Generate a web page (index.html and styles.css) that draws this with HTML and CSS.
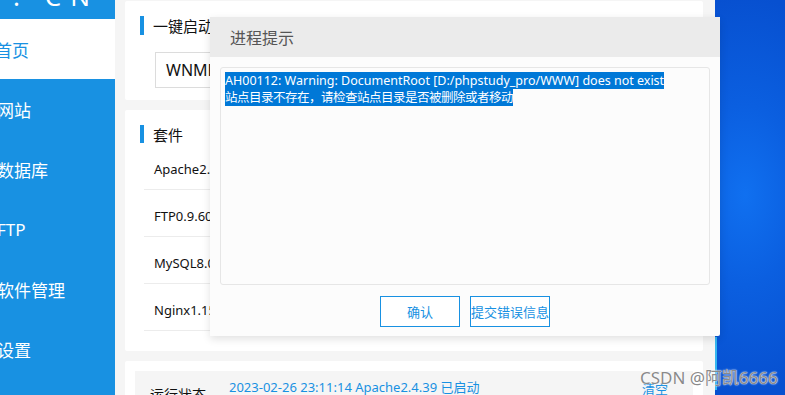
FILE: index.html
```html
<!DOCTYPE html>
<html lang="zh-CN">
<head>
<meta charset="utf-8">
<title>phpstudy</title>
<link rel="stylesheet" href="styles.css">
</head>
<body>
<div class="screen">
  <div class="app">
    <aside class="sidebar">
      <div class="logo"><span class="logo-text">. CN</span></div>
      <nav class="nav">
        <div class="nav-item active">首页</div>
        <div class="nav-item">网站</div>
        <div class="nav-item">数据库</div>
        <div class="nav-item">FTP</div>
        <div class="nav-item">软件管理</div>
        <div class="nav-item">设置</div>
      </nav>
    </aside>
    <main class="main">
      <section class="card card-start">
        <h2 class="card-title">一键启动</h2>
        <div class="select">WNMP</div>
      </section>
      <section class="card card-suite">
        <h2 class="card-title">套件</h2>
        <ul class="suite-list">
          <li class="suite-row">Apache2.4.39</li>
          <li class="suite-row">FTP0.9.60</li>
          <li class="suite-row">MySQL8.0.12</li>
          <li class="suite-row">Nginx1.15.11</li>
        </ul>
      </section>
      <section class="card card-status">
        <div class="status-box">
          <span class="status-label">运行状态</span>
          <span class="status-log">2023-02-26 23:11:14 Apache2.4.39 已启动</span>
          <span class="status-clear">清空</span>
        </div>
      </section>
    </main>
  </div>
  <div class="desktop"><div class="edge-glow"></div></div>

  <div class="dialog">
    <div class="dialog-head">进程提示</div>
    <div class="dialog-body">
      <div class="log-area">
        <span class="sel">AH00112: Warning: DocumentRoot [D:/phpstudy_pro/WWW] does not exist </span><br>
        <span class="sel sel-cn">站点目录不存在，请检查站点目录是否被删除或者移动</span>
      </div>
      <div class="dialog-actions">
        <button class="btn">确认</button>
        <button class="btn">提交错误信息</button>
      </div>
    </div>
  </div>

  <div class="watermark">CSDN @阿凯6666</div>
</div>
</body>
</html>
```

FILE: styles.css
```css
* { box-sizing: border-box; }
html, body { margin: 0; padding: 0; }
body {
  width: 785px;
  height: 395px;
  overflow: hidden;
  font-family: "Noto Sans", "Noto Sans CJK SC", sans-serif;
  background: #f5f5f5;
}
.screen {
  position: relative;
  display: flex;
  width: 785px;
  height: 395px;
  overflow: hidden;
}
.app {
  display: flex;
  width: 715px;
  height: 395px;
  background: #f5f5f5;
  flex: none;
  overflow: hidden;
}

/* sidebar */
.sidebar {
  width: 115px;
  flex: none;
  background: #1891e2;
  display: flex;
  flex-direction: column;
}
.logo {
  height: 19px;
  overflow: hidden;
}
.logo-text {
  display: block;
  margin-top: -17px;
  margin-left: 13px;
  font-family: "Noto Sans", sans-serif;
  font-size: 26px;
  line-height: 26px;
  color: #fff;
  letter-spacing: 9px;
  white-space: nowrap;
}
.nav { display: flex; flex-direction: column; }
.nav-item {
  height: 60px;
  flex: none;
  display: flex;
  align-items: center;
  margin-left: -3px;
  font-size: 17px;
  color: #fff;
}
.nav-item.active {
  background: #fff;
  color: #1891e2;
  margin-left: 0;
  text-indent: -5px;
}

/* main */
.main {
  width: 588px;
  flex: none;
  padding: 1px 0 0 10px;
  display: flex;
  flex-direction: column;
  gap: 10px;
}
.card {
  background: #fff;
  border-radius: 2px;
  width: 578px;
  flex: none;
}
.card-title {
  margin: 0;
  height: 19px;
  display: flex;
  align-items: center;
  font-size: 15px;
  font-weight: normal;
  color: #111;
  border-left: 4px solid #1891e2;
  padding-left: 9px;
}
.card-start {
  height: 99px;
  padding: 15px 0 0 15px;
}
.select {
  margin: 17px 0 0 15px;
  width: 230px;
  height: 36px;
  border: 1px solid #dcdcdc;
  display: flex;
  align-items: center;
  padding-left: 10px;
  font-size: 16px;
  color: #111;
}
.card-suite {
  height: 241px;
  padding: 15px 0 0 15px;
}
.card-suite .card-title { height: 18px; }
.suite-list {
  list-style: none;
  margin: 0;
  padding: 0 0 0 4px;
}
.suite-row {
  height: 47px;
  padding: 19px 0 0 10px;
  line-height: 15px;
  font-size: 13px;
  color: #111;
  border-bottom: 1px solid #ececec;
}
.card-status {
  height: 60px;
  padding: 10px 10px 0 10px;
}
.status-box {
  background: #f5f5f5;
  height: 50px;
  display: flex;
  align-items: flex-start;
  font-size: 13px;
}
.status-label {
  margin: 14px 0 0 15px;
  color: #111;
  font-size: 14px;
  line-height: 19px;
}
.status-log {
  margin: 8px 0 0 23px;
  line-height: 17px;
  color: #1891e2;
}
.status-clear {
  margin: 10px 25px 0 auto;
  line-height: 17px;
  color: #1891e2;
}

/* desktop */
.desktop {
  flex: 1;
  position: relative;
  background: radial-gradient(ellipse 120px 200px at 30px 195px, #1070f0 0%, #0b5fe0 45%, #0750d0 100%);
}
.edge-glow {
  position: absolute;
  left: 0;
  top: 337px;
  width: 2px;
  height: 53px;
  background: #35b6f0;
}

/* dialog */
.dialog {
  position: absolute;
  left: 210px;
  top: 17px;
  width: 510px;
  height: 319px;
  background: #fcfcfc;
  box-shadow: 0 3px 8px rgba(0,0,0,0.12);
  border-radius: 0 2px 2px 0;
}
.dialog-head {
  height: 40px;
  background: #ebebeb;
  padding-left: 20px;
  display: flex;
  align-items: center;
  font-size: 16px;
  color: #555;
}
.dialog-body {
  padding: 10px 10px 0 10px;
}
.log-area {
  height: 218px;
  border: 1px solid #e6e6e6;
  border-radius: 3px;
  background: #fcfcfc;
  padding: 4px 0 0 4px;
  font-size: 12.5px;
  line-height: 17px;
  color: #fff;
}
.sel {
  background: #0078d7;
  color: #fff;
}
.sel-cn {
  letter-spacing: -0.5px;
}
.dialog-actions {
  display: flex;
  justify-content: flex-end;
  gap: 10px;
  padding: 11px 160px 0 0;
}
.btn {
  width: 80px;
  height: 31px;
  background: #fff;
  border: 1.5px solid #1891e2;
  color: #1891e2;
  font-family: "Noto Sans", "Noto Sans CJK SC", sans-serif;
  font-size: 13px;
  padding: 0;
}

.watermark {
  position: absolute;
  left: 640px;
  top: 364px;
  font-size: 17px;
  color: #8a8a8a;
  text-shadow: 0 0 2px #fff, 0 0 1px #fff;
  white-space: nowrap;
}
```
